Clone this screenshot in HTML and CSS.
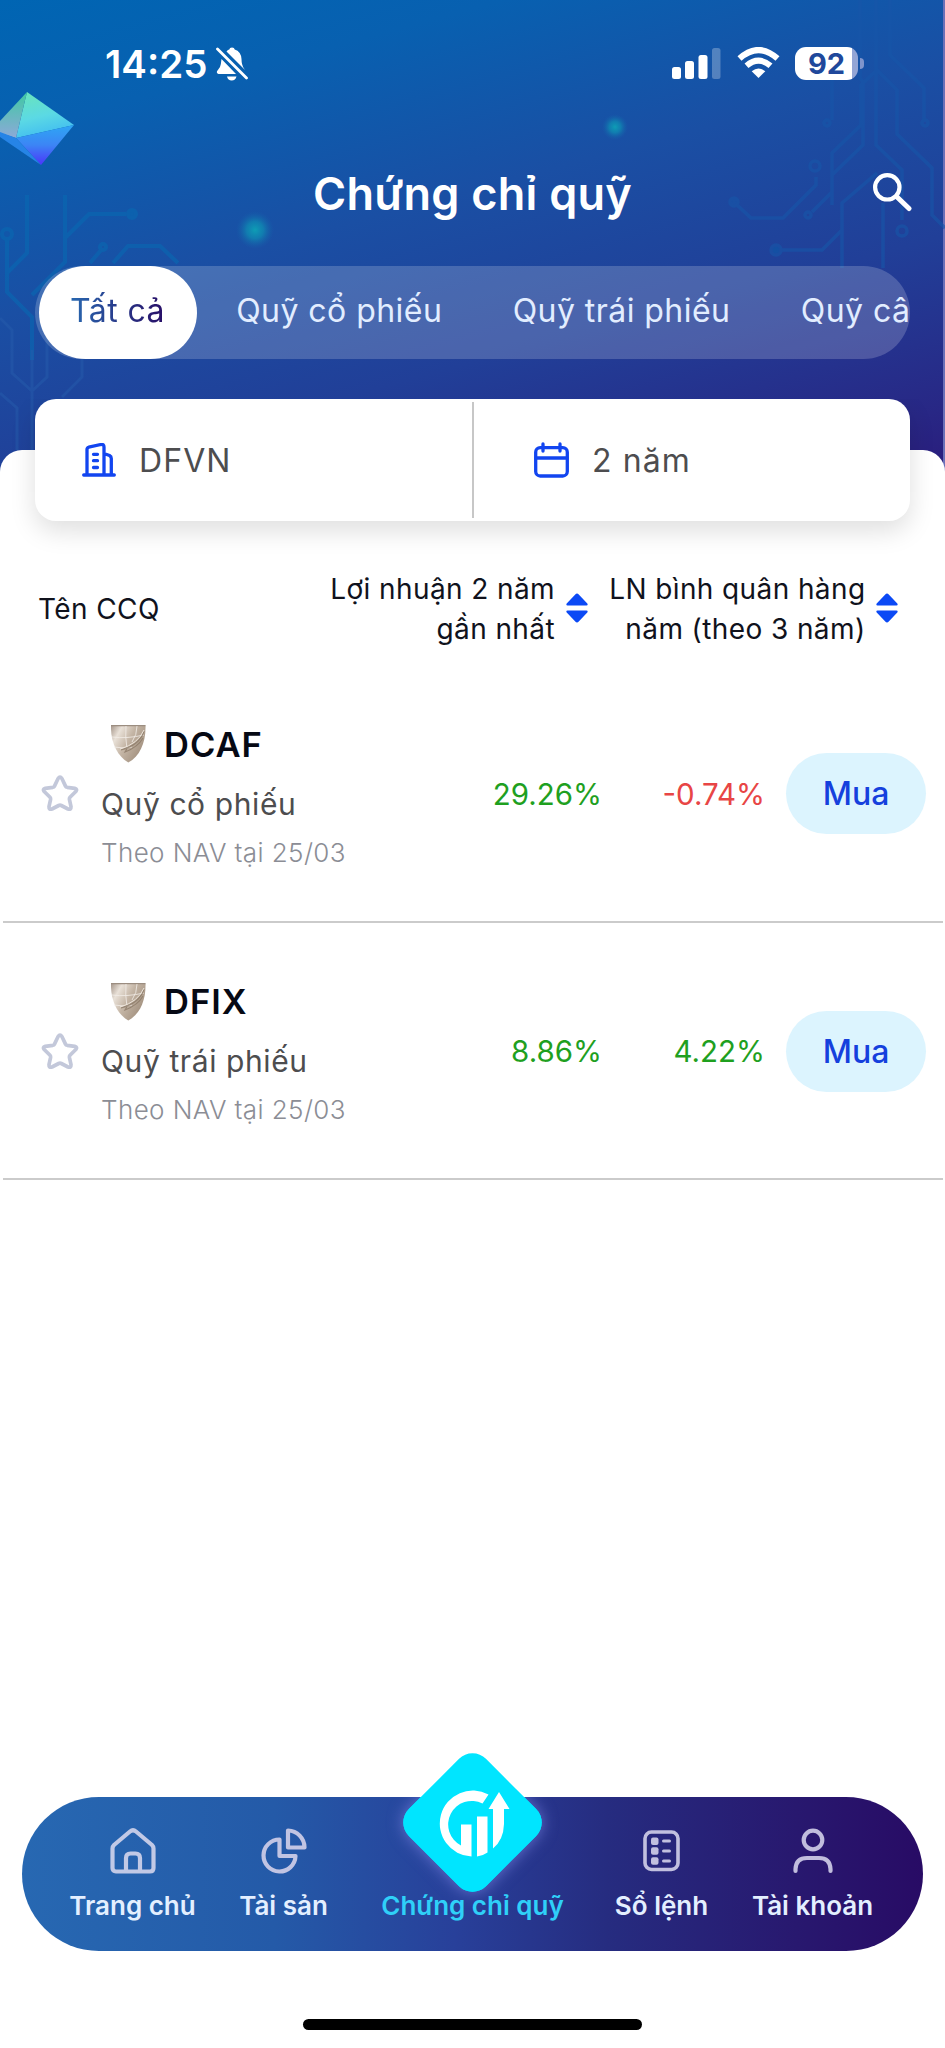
FILE: index.html
```html
<!DOCTYPE html>
<html lang="vi">
<head>
<meta charset="utf-8">
<title>Chứng chỉ quỹ</title>
<link rel="stylesheet" href="styles.css">
</head>
<body>
<svg class="defs" width="0" height="0" aria-hidden="true">
  <defs>
    <linearGradient id="shieldFill" x1="0" y1="0" x2="1" y2="0.6">
      <stop offset="0" stop-color="#a5968a"/><stop offset="0.25" stop-color="#e9e1d8"/><stop offset="0.55" stop-color="#c4b5a5"/><stop offset="1" stop-color="#a18f7d"/>
    </linearGradient>
    <symbol id="shield" viewBox="0 0 35 38">
      <path d="M0 .5H34.500C35 17 29 31 17.300 37.500C6 31 -.5 17 0 .5Z" fill="url(#shieldFill)"/>
      <path d="M0 .5H34.500" stroke="#9b8d80" stroke-width="1.500"/>
      <path d="M1 12Q15 14 33 10M3 22Q14 24 21 22M15 1Q14 12 16 24M26 1Q26 10 21 17" fill="none" stroke="#f3eee8" stroke-width="1" opacity=".8"/>
      <path d="M33 6Q29 20 10 25L17 22 14 27Q27 22 32 13" fill="none" stroke="#8b7967" stroke-width="1.100" opacity=".8"/>
      <path d="M33 5Q27 19 9 24" fill="none" stroke="#eee6dc" stroke-width="1"/>
    </symbol>
    <symbol id="star" viewBox="0 0 38 37">
      <path d="M17.100 3.500Q19 .8 20.900 3.500L24.500 11.100Q25 12.100 26.200 12.300L33.800 13.300Q36.800 14 34.800 16.500L29 22.300Q28.200 23.200 28.400 24.400L30 31.700Q30.200 35 27 34L20.300 30.500Q19 29.800 17.700 30.500L11 34Q7.800 35 8 31.700L9.600 24.400Q9.800 23.200 9 22.300L3.200 16.500Q1.200 14 4.200 13.300L11.800 12.300Q13 12.100 13.500 11.100Z" fill="none" stroke="#c3c8da" stroke-width="3.700" stroke-linejoin="round"/>
    </symbol>
    <symbol id="sort" viewBox="0 0 22 30">
      <path d="M11 0.500Q12 .5 12.500 1.200L21.300 10.500Q22.300 12.300 20.500 12.500H1.500Q-.3 12.300 .7 10.500L9.500 1.200Q10 .5 11 .5ZM11 29.500Q12 29.500 12.500 28.800L21.300 19.500Q22.300 17.700 20.500 17.500H1.500Q-.3 17.700 .7 19.500L9.500 28.800Q10 29.500 11 29.500Z" fill="#0b49f5"/>
    </symbol>
  </defs>
</svg>
<div class="app">
  <div class="backdrop">
    <svg width="945" height="500" viewBox="0 0 945 500" fill="none">
      <defs>
        <radialGradient id="glow"><stop offset="0" stop-color="#0e9db5"/><stop offset=".45" stop-color="#0e8fb4" stop-opacity=".7"/><stop offset="1" stop-color="#1465ad" stop-opacity="0"/></radialGradient>
        <linearGradient id="gemTop" x1="0" y1="0" x2=".3" y2="1"><stop offset="0" stop-color="#6be5b8"/><stop offset=".6" stop-color="#5bd9e4"/><stop offset="1" stop-color="#43bff0"/></linearGradient>
        <linearGradient id="gemSide" x1="0" y1="0" x2="0" y2="1"><stop offset="0" stop-color="#3fc9a4"/><stop offset="1" stop-color="#8da9d8"/></linearGradient>
        <linearGradient id="gemLow" x1="0" y1="0" x2="0" y2="1"><stop offset="0" stop-color="#2ea6f4"/><stop offset=".5" stop-color="#3c85f5"/><stop offset="1" stop-color="#4b35fa"/></linearGradient>
      </defs>
      <path d="M27 92L74 125 16 138Z" fill="url(#gemTop)"/>
      <path d="M27 92L16 138 0 133V121Z" fill="url(#gemSide)"/>
      <path d="M74 125L41 165 16 138Z" fill="url(#gemLow)"/>
      <path d="M16 138L41 165 0 137V132Z" fill="#2684e6"/>
      <circle cx="255" cy="230" r="19" fill="url(#glow)"/>
      <circle cx="615" cy="127" r="13" fill="url(#glow)"/>
      <g stroke="#0969b2" stroke-width="4" opacity=".6">
        <path d="M27 195V253L7 273M7 240V292L32 317V360M65 195V262L32 295M65 238L89 214H126M90 263L102 249M113 263L128 246H160L178 263"/>
        <circle cx="7" cy="234" r="5"/><circle cx="132" cy="214" r="4" fill="#0969b2"/><circle cx="103" cy="247" r="3"/>
      </g>
      <g stroke="#255cab" stroke-width="3" opacity=".5">
        <path d="M0 318L12 330V373L32 391L47 377V300M32 350V450M0 393L17 408V450M82 359V377L62 397"/>
      </g>
      <g stroke="#1756a9" stroke-width="3.500" opacity=".62">
        <path d="M860 0V78L863 82V145L832 175V205M876 0V145L902 170V220M890 0V55L924 88V120M877 70L861 85V125L832 153V192L812 212M877 70L897 90V134L932 168V215L945 228M832 80V120M877 173L842 203V268M842 230L822 250H779M883 203V268M816 177V185L783 218H751L736 204"/>
        <circle cx="827" cy="123" r="3"/><circle cx="925" cy="123" r="3"/><circle cx="815" cy="166" r="5"/><circle cx="734" cy="202" r="4" fill="#1756a9"/><circle cx="808" cy="215" r="3"/><circle cx="902" cy="231" r="5"/><circle cx="776" cy="250" r="5" fill="#0d59a9"/>
      </g>
    </svg>
  </div>

  <div class="status">
    <div class="clock">14:25
      <svg width="32" height="34" viewBox="0 0 32 34"><path d="M10.500 4.500Q12 2.700 13.300 2.500Q13.500 .5 16 .5T18.700 2.500Q25 4.500 25.500 12Q25.500 18 28 21.500L29 23ZM5.500 12L20 27H2.500Q.3 26.500 1 24.300L4 20Q5 17.500 5.500 12ZM11 29.500H20.500Q19.500 33.500 15.700 33.500T11 29.500Z" fill="#fff"/><path d="M1.500 2L30.500 31" stroke="#fff" stroke-width="2.800" stroke-linecap="round"/></svg>
    </div>
    <div class="signals">
      <svg width="49" height="31" viewBox="0 0 49 31" fill="#fff"><rect x="0" y="19" width="9" height="12" rx="2.500"/><rect x="13" y="13" width="9" height="18" rx="2.500"/><rect x="26.500" y="7" width="9" height="24" rx="2.500"/><rect x="40" y="0" width="8.500" height="31" rx="2.500" opacity=".27"/></svg>
      <svg class="wifi" width="43" height="32" viewBox="0 0 43 32" fill="none" stroke="#fff" stroke-width="6"><path d="M2.500 11.500Q21.500 -5.500 40.500 11.500"/><path d="M9.500 18.800Q21.500 8.500 33.500 18.800"/><path d="M21.500 31L14.700 24.300Q21.500 18.600 28.300 24.300Z" fill="#fff" stroke="none"/></svg>
      <div class="battery"><span class="level">92</span></div><i class="battery-tip"></i>
    </div>
  </div>

  <div class="titlebar">
    <h1>Chứng chỉ quỹ</h1>
    <svg class="search" width="39" height="39" viewBox="0 0 39 39" fill="none" stroke="#fff"><circle cx="14.300" cy="14.300" r="12.200" stroke-width="4.200"/><path d="M23.500 23.500L36 35.500" stroke-width="5" stroke-linecap="round"/></svg>
  </div>

  <div class="tabs">
    <div class="tab active"><span>Tất cả</span></div>
    <div class="tab">Quỹ cổ phiếu</div>
    <div class="tab">Quỹ trái phiếu</div>
    <div class="tab last">Quỹ câ</div>
  </div>

  <div class="filters">
    <div class="filter">
      <svg width="34" height="34" viewBox="0 0 34 34" fill="none" stroke="#1245f0" stroke-width="3.300" stroke-linecap="round" stroke-linejoin="round"><path d="M1.700 32H32.300M5 32V6.500Q5 4.800 6.700 4.200L19 1.500Q22 1 22 4V32M22 10.500L27.500 12.500Q29.300 13.500 29.300 15.500V32M11.500 11.300H15.500M11.500 17.700H15.500M11.500 24.500H15.500"/></svg>
      <span>DFVN</span>
    </div>
    <div class="filter period">
      <svg width="35" height="36" viewBox="0 0 35 36" fill="none" stroke="#1245f0" stroke-width="3.300" stroke-linecap="round"><rect x="1.700" y="5.700" width="31.600" height="28.300" rx="4.500"/><path d="M2 16H33M9 2V9M26 2V9"/></svg>
      <span>2 năm</span>
    </div>
  </div>

  <main class="sheet">
    <div class="thead">
      <div class="th-name">Tên CCQ</div>
      <div class="th">Lợi nhuận 2 năm<br>gần nhất</div>
      <svg class="sort" width="22" height="30"><use href="#sort"/></svg>
      <div class="th th-avg">LN bình quân hàng<br>năm (theo 3 năm)</div>
      <svg class="sort" width="22" height="30"><use href="#sort"/></svg>
    </div>
    <div class="row">
      <svg class="star" width="38" height="37"><use href="#star"/></svg>
      <div class="fund">
        <div class="code"><svg width="35" height="38"><use href="#shield"/></svg><b>DCAF</b></div>
        <div class="type">Quỹ cổ phiếu</div>
        <div class="nav-date">Theo NAV tại 25/03</div>
      </div>
      <div class="pct up">29.26%</div>
      <div class="pct avg down">-0.74%</div>
      <div class="buy">Mua</div>
    </div>
    <div class="row">
      <svg class="star" width="38" height="37"><use href="#star"/></svg>
      <div class="fund">
        <div class="code"><svg width="35" height="38"><use href="#shield"/></svg><b>DFIX</b></div>
        <div class="type">Quỹ trái phiếu</div>
        <div class="nav-date">Theo NAV tại 25/03</div>
      </div>
      <div class="pct up">8.86%</div>
      <div class="pct avg up">4.22%</div>
      <div class="buy">Mua</div>
    </div>
  </main>

  <nav class="tabbar">
    <div class="item">
      <svg width="46" height="46" viewBox="0 0 46 46" fill="none" stroke="#c1c9e6" stroke-width="4.200" stroke-linejoin="round"><path d="M2.500 20.500Q2.500 18.500 4 17L20 3.500Q23 1 26 3.500L42 17Q43.500 18.500 43.500 20.500V40Q43.500 43.500 40 43.500H6Q2.500 43.500 2.500 40Z"/><path d="M16 43V30Q16 25.500 20.500 25.500H25.500Q30 25.500 30 30V43"/></svg>
      <span>Trang chủ</span>
    </div>
    <div class="item">
      <svg width="46" height="46" viewBox="0 0 46 46" fill="none" stroke="#c1c4e3" stroke-width="4.200" stroke-linejoin="round"><path d="M18.500 11.500A16 16 0 1 0 34.500 28H18.500Z"/><path d="M27 2.500A17 17 0 0 1 43.500 19.500H27Z"/></svg>
      <span>Tài sản</span>
    </div>
    <div class="item current">
      <div class="glow"></div>
      <div class="diamond"></div>
      <svg class="growth" width="71" height="67" viewBox="0 0 71 67" fill="#fff"><path d="M49.500 4.500A33 33 0 1 0 32.500 66.500V34.500H22V55.500A23.500 23.500 0 0 1 43.500 13.500Z"/><path d="M38 26.500H48.500V62.500Q43.500 66 38 66.500ZM54 19H49.500L60 2 70.500 19H65V34Q64.500 50 54 58.500Z"/></svg>
      <span class="label">Chứng chỉ quỹ</span>
    </div>
    <div class="item">
      <svg width="37" height="46" viewBox="0 0 37 46" fill="none" stroke="#c1c0df" stroke-width="3.600" stroke-linecap="round"><rect x="2" y="4" width="33" height="37.500" rx="6.500"/><path d="M20.500 13H26.500M20.500 23H26.500M20.500 33H26.500" stroke-width="3"/><g fill="#c1c0df" stroke="none"><rect x="8" y="9.500" width="7.500" height="7.500" rx="2"/><rect x="8" y="19.300" width="7.500" height="7.500" rx="2"/><rect x="8" y="29.300" width="7.500" height="7.500" rx="2"/></g></svg>
      <span>Sổ lệnh</span>
    </div>
    <div class="item">
      <svg width="40" height="46" viewBox="0 0 40 46" fill="none" stroke="#c1bddd" stroke-width="4.200" stroke-linecap="round"><circle cx="20" cy="12" r="9.300"/><path d="M2.500 43V41Q3 30 14 30H26Q37 30 37.500 41V43"/></svg>
      <span>Tài khoản</span>
    </div>
  </nav>
  <div class="home-indicator"></div>
</div>
</body>
</html>
```
FILE: styles.css
```css
* { box-sizing: border-box; }
body {
  margin: 0;
  font-family: Inter, "Noto Sans", sans-serif;
  background: #fff;
}
svg { display: block; flex: none; }
.defs { position: absolute; }
.app {
  position: relative;
  width: 945px;
  height: 2048px;
  overflow: hidden;
  display: flex;
  flex-direction: column;
}
.backdrop {
  position: absolute;
  inset: 0 0 auto 0;
  height: 500px;
  background: linear-gradient(165deg, #0065b3 0%, #0860b0 18%, #1a4fa4 42%, #213f98 65%, #282785 88%, #2b1878 100%);
  border-right: 2px solid #6a70b8;
}
.status {
  position: relative;
  height: 132px;
  padding: 0 81px 0 105px;
  display: flex;
  justify-content: space-between;
  align-items: center;
  color: #fff;
}
.clock {
  display: flex;
  align-items: center;
  gap: 9px;
  margin-top: -4px;
  font-size: 38.500px;
  font-weight: 600;
}
.signals { display: flex; align-items: center; margin-top: -6px; }
.wifi { margin-left: 16px; }
.battery {
  margin-left: 15px;
  width: 63px;
  height: 33px;
  border-radius: 11px;
  background: linear-gradient(90deg, #fff 57px, #93a5d5 57px);
  color: #20489b;
  font-size: 29px;
  font-weight: 700;
  line-height: 34px;
  text-align: center;
}
.battery-tip {
  width: 4px;
  height: 11px;
  margin-left: 2px;
  border-radius: 0 5px 5px 0;
  background: #8095cc;
}
.titlebar {
  position: relative;
  height: 134px;
  padding: 0 33px 0 313px;
  display: flex;
  justify-content: space-between;
  align-items: flex-start;
  color: #fff;
}
h1 {
  margin: 34px 0 0;
  font-size: 45px;
  line-height: 56px;
  font-weight: 600;
  letter-spacing: .25px;
  white-space: nowrap;
}
.search { margin-top: 41px; }
.tabs {
  position: relative;
  margin: 0 35px;
  height: 93px;
  padding-left: 4px;
  border-radius: 47px;
  background: rgba(255, 255, 255, .19);
  display: flex;
}
.tab {
  flex: none;
  padding: 0 35.200px;
  font-size: 32px;
  line-height: 89px;
  letter-spacing: .45px;
  color: #e2edff;
  white-space: nowrap;
}
.tab.last { padding-right: 0; }
.tab.active {
  width: 158px;
  margin-right: 4px;
  padding: 0 31px;
  border-radius: 47px;
  background: #fff;
}
.tab.active span {
  background: linear-gradient(90deg, #2868b0, #280d66);
  -webkit-background-clip: text;
  background-clip: text;
  color: transparent;
}
.filters {
  position: relative;
  z-index: 2;
  margin: 40px 35px 0;
  height: 122px;
  border-radius: 21px;
  background: #fff;
  box-shadow: 0 10px 26px rgba(0, 0, 0, .13);
  display: flex;
  clip-path: inset(0 -50px -60px -50px);
}
.filter {
  width: 437px;
  padding-left: 47px;
  display: flex;
  align-items: center;
  gap: 23px;
  font-size: 32px;
  letter-spacing: 1.100px;
  color: #4d4d4f;
}
.filter.period {
  padding-left: 60px;
  margin: 3px 0;
  border-left: 2px solid #c7c7c7;
}
.sheet {
  position: relative;
  z-index: 1;
  margin-top: -71px;
  height: 1347px;
  padding-top: 71px;
  border-radius: 22px 22px 0 0;
  background: #fff;
}
.thead {
  height: 144px;
  padding: 48px 46px 0 38px;
  display: flex;
  align-items: flex-start;
  font-size: 28px;
  line-height: 40px;
  letter-spacing: .4px;
  color: #10121c;
}
.th-name { width: 251px; padding-top: 20px; }
.th { width: 266px; text-align: right; white-space: nowrap; }
.th-avg { width: 278px; }
.sort { margin: 24px 0 0 10.500px; }
.row {
  height: 257.500px;
  margin: 0 2px 0 3px;
  padding: 0 17px 0 38px;
  border-bottom: 2px solid #cbcbcb;
  display: flex;
  align-items: center;
}
.star { margin-top: 2px; }
.fund { width: 336px; margin-left: 22px; }
.code {
  height: 67px;
  padding-left: 10px;
  display: flex;
  align-items: center;
  gap: 18px;
  font-size: 34.500px;
  color: #060914;
}
.code b { font-weight: 600; letter-spacing: 1px; }
.type { font-size: 30px; line-height: 52px; letter-spacing: .6px; color: #4d4d4f; }
.nav-date { font-size: 26px; line-height: 45px; letter-spacing: .4px; font-weight: 300; color: #8b8d95; }
.pct {
  width: 165px;
  margin-top: 2px;
  text-align: right;
  font-size: 29.500px;
}
.pct.avg { width: 163px; }
.up { color: #1fa01f; }
.down { color: #e84545; }
.buy {
  width: 140px;
  height: 81px;
  margin: 2px 0 0 auto;
  border-radius: 41px;
  background: #dcf4fe;
  color: #1540dd;
  font-size: 32px;
  font-weight: 500;
  line-height: 82px;
  text-align: center;
}
.tabbar {
  position: relative;
  z-index: 2;
  margin: 0 22px;
  height: 154px;
  padding-left: 35px;
  border-radius: 77px;
  background: linear-gradient(90deg, #2768b2 0%, #245aa8 28%, #28409a 48%, #262c80 65%, #28186f 86%, #280b65 100%);
  display: grid;
  grid-template-columns: 151px 151px 227px 151px 151px;
}
.item {
  padding-top: 31px;
  display: flex;
  flex-direction: column;
  align-items: center;
  gap: 12px;
  font-size: 26px;
  font-weight: 600;
  line-height: 40px;
  color: #e3efff;
  white-space: nowrap;
}
.current { position: relative; color: #2fd0f8; padding-top: 89px; }
.label { position: relative; }
/* The glow is cut at the bar's top edge; the diamond rises above it. */
.glow {
  position: absolute;
  inset: 0;
  overflow: hidden;
}
.diamond, .glow::before {
  position: absolute;
  left: 59px;
  top: -29.500px;
  width: 109px;
  height: 109px;
  border-radius: 19px;
  background: #00e5ff;
  transform: rotate(45deg);
}
.glow::before {
  content: "";
  box-shadow: 0 0 16px rgba(125, 135, 230, .75);
}
.growth { position: absolute; left: 80px; top: -7px; }
.home-indicator {
  width: 339px;
  height: 11px;
  margin: 68px 0 0 303px;
  border-radius: 6px;
  background: #000;
}
```
